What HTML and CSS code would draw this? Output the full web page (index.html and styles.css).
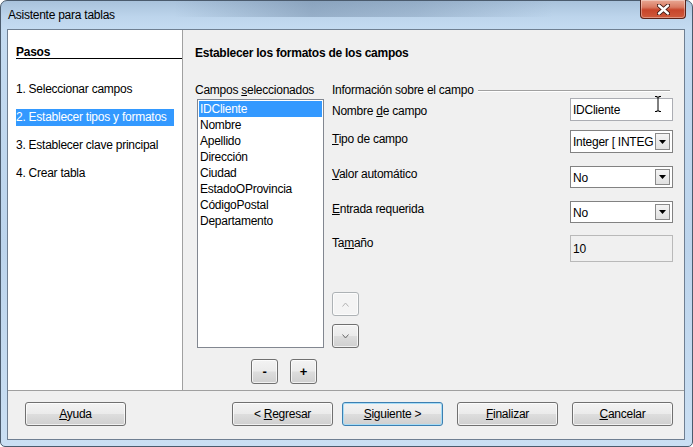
FILE: index.html
```html
<!DOCTYPE html>
<html lang="es">
<head>
    <meta charset="UTF-8">
    <title>Asistente para tablas</title>
    <link rel="stylesheet" href="styles.css">
</head>
<body>
    <div class="window">
        <div class="titlebar">
            <span class="title">Asistente para tablas</span>
            <div class="close">
                <svg width="13" height="11" viewBox="0 0 13 11">
                    <path d="M2 1.5 L11 9.5 M11 1.5 L2 9.5" stroke="#3b1510" stroke-width="4.2" stroke-linecap="round"/>
                    <path d="M2 1.5 L11 9.5 M11 1.5 L2 9.5" stroke="#ffffff" stroke-width="2.4" stroke-linecap="round"/>
                </svg>
            </div>
        </div>

        <div class="client">
            <div class="main">
                <div class="steps">
                    <div class="steps-title">Pasos</div>
                    <div class="step-list">
                        <div class="step">1. Seleccionar campos</div>
                        <div class="step active">2. Establecer tipos y formatos</div>
                        <div class="step">3. Establecer clave principal</div>
                        <div class="step">4. Crear tabla</div>
                    </div>
                </div>

                <div class="page">
                    <div class="page-title">Establecer los formatos de los campos</div>

                    <div class="columns">
                        <div class="list-col">
                            <div class="col-label">Campos <u>s</u>eleccionados</div>
                            <div class="listbox">
                                <div class="list-item selected">IDCliente</div>
                                <div class="list-item">Nombre</div>
                                <div class="list-item">Apellido</div>
                                <div class="list-item">Dirección</div>
                                <div class="list-item">Ciudad</div>
                                <div class="list-item">EstadoOProvincia</div>
                                <div class="list-item">CódigoPostal</div>
                                <div class="list-item">Departamento</div>
                            </div>
                            <div class="list-buttons">
                                <div class="btn small-btn">-</div>
                                <div class="btn small-btn">+</div>
                            </div>
                        </div>

                        <div class="info-col">
                            <div class="info-head">Información sobre el campo</div>

                            <div class="field f-name">
                                <div class="field-label">Nombre <u>d</u>e campo</div>
                                <div class="field-control textbox">
                                    <span>IDCliente</span>
                                    <svg class="ibeam" width="8" height="18" viewBox="0 0 8 18">
                                        <path d="M1 1.5 H3 M5 1.5 H7 M4 2 V16 M1 16.5 H3 M5 16.5 H7 M2.5 2 H5.5 M2.5 16 H5.5" stroke="#000" stroke-width="1"/>
                                    </svg>
                                </div>
                            </div>

                            <div class="field f-type">
                                <div class="field-label"><u>T</u>ipo de campo</div>
                                <div class="field-control combo">
                                    <span class="combo-text">Integer [ INTEG</span>
                                    <span class="combo-arrow"><svg width="7" height="4" viewBox="0 0 7 4"><polygon points="0,0 7,0 3.5,4" fill="#000"/></svg></span>
                                </div>
                            </div>

                            <div class="field f-auto">
                                <div class="field-label"><u>V</u>alor automático</div>
                                <div class="field-control combo">
                                    <span class="combo-text">No</span>
                                    <span class="combo-arrow"><svg width="7" height="4" viewBox="0 0 7 4"><polygon points="0,0 7,0 3.5,4" fill="#000"/></svg></span>
                                </div>
                            </div>

                            <div class="field f-req">
                                <div class="field-label"><u>E</u>ntrada requerida</div>
                                <div class="field-control combo">
                                    <span class="combo-text">No</span>
                                    <span class="combo-arrow"><svg width="7" height="4" viewBox="0 0 7 4"><polygon points="0,0 7,0 3.5,4" fill="#000"/></svg></span>
                                </div>
                            </div>

                            <div class="field f-size">
                                <div class="field-label">Ta<u>m</u>año</div>
                                <div class="field-control textbox readonly"><span>10</span></div>
                            </div>

                            <div class="updown">
                                <div class="btn arrow-btn disabled">
                                    <svg width="7" height="5" viewBox="0 0 7 5"><polyline points="0.5,4.5 3.5,1 6.5,4.5" fill="none" stroke="#b4b4b4" stroke-width="1"/></svg>
                                </div>
                                <div class="btn arrow-btn">
                                    <svg width="7" height="5" viewBox="0 0 7 5"><polyline points="0.5,0.5 3.5,4 6.5,0.5" fill="none" stroke="#6a6a6a" stroke-width="1"/></svg>
                                </div>
                            </div>
                        </div>
                    </div>
                </div>
            </div>

            <div class="footer">
                <div class="btn"><span><u>A</u>yuda</span></div>
                <div class="btn push-right"><span>&lt; <u>R</u>egresar</span></div>
                <div class="btn default"><span><u>S</u>iguiente &gt;</span></div>
                <div class="btn wide-gap"><span><u>F</u>inalizar</span></div>
                <div class="btn wide-gap"><span><u>C</u>ancelar</span></div>
            </div>
        </div>
    </div>
</body>
</html>
```

FILE: styles.css
```css
body {
    margin: 0;
    font-family: "Liberation Sans", Arial, sans-serif;
    font-size: 12px;
    letter-spacing: -0.25px;
    color: #000;
}
u {
    text-decoration: underline;
    text-underline-offset: 1px;
}
.window {
    width: 693px;
    height: 447px;
    box-sizing: border-box;
    border: 1px solid #4b5b6d;
    border-radius: 7px 7px 5px 5px;
    padding: 0 7px 6px 6px;
    display: flex;
    flex-direction: column;
    background:
        linear-gradient(to right, rgba(255,255,255,0) 25%, rgba(80,105,135,0.35) 45%, rgba(80,105,135,0.25) 60%, rgba(255,255,255,0) 80%) top / 100% 16px no-repeat,
        linear-gradient(180deg, #a9c2db 0px, #bdd5ec 16px, #c4dbf1 28px, #bcd4ec 55%, #cadff3 100%);
}
.titlebar {
    height: 28px;
    display: flex;
    align-items: flex-start;
}
.title {
    padding: 6px 0 0 1px;
    line-height: 16px;
}
.close {
    margin: -1px -1px 0 auto;
    width: 44px;
    height: 18px;
    border: 1px solid #5b2218;
    border-top: none;
    border-radius: 0 0 4px 4px;
    display: flex;
    align-items: center;
    justify-content: center;
    background: linear-gradient(180deg, #e9a894 0%, #d97a62 40%, #c7452b 55%, #cf5a3c 100%);
    box-shadow: inset 0 0 0 1px rgba(255,255,255,0.35);
}
.client {
    flex: 1;
    border: 1px solid #6f7f92;
    background-color: #f0f0f0;
    display: flex;
    flex-direction: column;
}
.main {
    height: 360px;
    display: flex;
    border-bottom: 1px solid #a0a0a0;
}
.steps {
    width: 174px;
    background-color: #fff;
    border-right: 1px solid #a0a0a0;
    padding-top: 17px;
}
.steps-title {
    margin-left: 8px;
    font-weight: bold;
    line-height: 11px;
    border-bottom: 1px solid #000;
}
.step-list {
    margin: 22px 8px 0 8px;
}
.step {
    line-height: 17px;
    margin-bottom: 11px;
    white-space: nowrap;
}
.step.active {
    background-color: #3399ff;
    color: #fff;
}
.page {
    flex: 1;
    padding: 15px 11px 0 12px;
}
.page-title {
    font-weight: bold;
    line-height: 16px;
}
.columns {
    margin-top: 21px;
    display: flex;
    gap: 8px;
}
.list-col {
    width: 129px;
}
.col-label {
    line-height: 16px;
    white-space: nowrap;
}
.listbox {
    margin: 1px 0 0 2px;
    width: 127px;
    height: 249px;
    box-sizing: border-box;
    border: 1px solid #828790;
    background-color: #fff;
    padding: 1px;
}
.list-item {
    line-height: 16px;
    padding: 0 1px;
    white-space: nowrap;
}
.list-item.selected {
    background-color: #3399ff;
    color: #fff;
}
.list-buttons {
    margin-top: 11px;
    padding-left: 56px;
    display: flex;
    gap: 12px;
}
.info-col {
    width: 341px;
}
.info-head {
    display: flex;
    align-items: center;
    gap: 4px;
    line-height: 16px;
    padding-right: 3px;
    white-space: nowrap;
}
.info-head::after {
    content: "";
    flex: 1;
    border-top: 1px solid #a0a0a0;
    border-bottom: 1px solid #fff;
    margin-top: 2px;
}
.field {
    display: flex;
    align-items: flex-start;
}
.field-label {
    flex: 1;
    line-height: 16px;
}
.field-control {
    width: 103px;
    box-sizing: border-box;
    height: 100%;
}
.f-name { height: 23px; }
.f-name .field-label { padding-top: 5px; }
.f-type { height: 23px; margin-top: 9px; }
.f-type .field-label { padding-top: 1px; }
.f-auto { height: 22px; margin-top: 13px; }
.f-req { height: 22px; margin-top: 13px; }
.f-size { height: 27px; margin-top: 12px; }
.textbox {
    position: relative;
    border: 1px solid #abadb3;
    background-color: #fff;
    padding-left: 2px;
    display: flex;
    align-items: center;
}
.textbox.readonly {
    background-color: #f0f0f0;
    border-color: #b9b9b9;
    padding-top: 1px;
}
.ibeam {
    position: absolute;
    left: 83px;
    top: -4px;
}
.combo {
    border: 1px solid #828282;
    background-color: #fff;
    padding: 2px;
    display: flex;
    align-items: center;
    overflow: hidden;
}
.combo-text {
    flex: 1;
    white-space: nowrap;
    padding-top: 1px;
}
.combo-arrow {
    width: 15px;
    height: 100%;
    box-sizing: border-box;
    border: 1px solid #8a8a8a;
    background: linear-gradient(180deg, #f4f4f4, #e1e1e1);
    display: flex;
    align-items: center;
    justify-content: center;
}
.updown {
    margin-top: 30px;
    display: flex;
    flex-direction: column;
    gap: 8px;
}
.btn {
    width: 101px;
    height: 24px;
    box-sizing: border-box;
    border: 1px solid #707070;
    border-radius: 3px;
    background: linear-gradient(180deg, #f3f3f3 0%, #ebebeb 48%, #dddddd 52%, #cfcfcf 100%);
    box-shadow: inset 0 0 0 1px rgba(255,255,255,0.7);
    display: flex;
    align-items: center;
    justify-content: center;
    white-space: nowrap;
}
.small-btn {
    width: 27px;
    height: 25px;
    font-weight: bold;
    font-size: 13px;
}
.arrow-btn {
    width: 27px;
    height: 24px;
}
.arrow-btn.disabled {
    border-color: #adb2b5;
    background: #f4f4f4;
}
.footer {
    flex: 1;
    display: flex;
    align-items: flex-start;
    padding: 11px 11px 0 17px;
}
.push-right {
    margin-left: auto;
}
.btn.default {
    margin-left: 9px;
    border-color: #3c7fb1;
    box-shadow: inset 0 0 0 1px #a6dcf6;
}
.wide-gap {
    margin-left: 14px;
}
```
